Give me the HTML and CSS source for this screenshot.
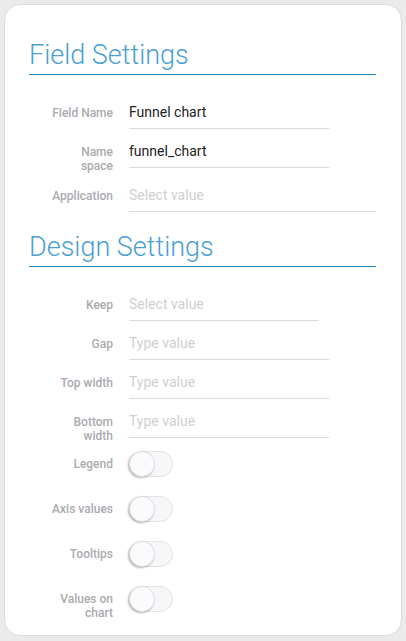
FILE: index.html
```html
<!DOCTYPE html>
<html>
<head>
<meta charset="utf-8">
<link rel="stylesheet" href="styles.css">
</head>
<body>
<div class="card">
  <section class="section">
    <h2 class="title">Field Settings</h2>
    <div class="row">
      <div class="label">Field Name</div>
      <div class="field"><span class="value">Funnel chart</span></div>
    </div>
    <div class="row">
      <div class="label">Name<br>space</div>
      <div class="field"><span class="value">funnel_chart</span></div>
    </div>
    <div class="row">
      <div class="label">Application</div>
      <div class="field field-wide"><span class="placeholder">Select value</span></div>
    </div>
  </section>
  <section class="section">
    <h2 class="title">Design Settings</h2>
    <div class="row">
      <div class="label">Keep</div>
      <div class="field field-short"><span class="placeholder">Select value</span></div>
    </div>
    <div class="row">
      <div class="label">Gap</div>
      <div class="field"><span class="placeholder">Type value</span></div>
    </div>
    <div class="row">
      <div class="label">Top width</div>
      <div class="field"><span class="placeholder">Type value</span></div>
    </div>
    <div class="row">
      <div class="label">Bottom<br>width</div>
      <div class="field"><span class="placeholder">Type value</span></div>
    </div>
    <div class="toggles">
      <div class="toggle-row">
        <div class="label">Legend</div>
        <div class="toggle"><span class="knob"></span></div>
      </div>
      <div class="toggle-row">
        <div class="label">Axis values</div>
        <div class="toggle"><span class="knob"></span></div>
      </div>
      <div class="toggle-row">
        <div class="label">Tooltips</div>
        <div class="toggle"><span class="knob"></span></div>
      </div>
      <div class="toggle-row">
        <div class="label">Values on<br>chart</div>
        <div class="toggle"><span class="knob"></span></div>
      </div>
    </div>
  </section>
</div>
</body>
</html>
```
FILE: styles.css
```css
html, body {
  margin: 0;
  padding: 0;
}
body {
  background: #ebebeb;
  font-family: Roboto, "Liberation Sans", sans-serif;
  width: 406px;
  height: 641px;
  overflow: hidden;
}
.card {
  box-sizing: border-box;
  margin: 4px;
  width: 398px;
  height: 632px;
  background: #ffffff;
  border: 1px solid #dcdcdc;
  border-radius: 16px;
  padding: 34px 25px 0 24px;
}
.section + .section {
  margin-top: 19px;
}
.title {
  margin: 0 0 21px 0;
  font-size: 27px;
  line-height: 32px;
  font-weight: 300;
  color: #4a9fd3;
  padding-bottom: 3px;
  border-bottom: 1px solid #2a8bbf;
}
.row {
  display: flex;
  align-items: baseline;
  margin-bottom: 6px;
}
.label {
  width: 84px;
  flex: none;
  text-align: right;
  font-size: 12px;
  line-height: 14px;
  font-weight: 500;
  color: #aaaaaf;
  margin-right: 16px;
}
.field {
  width: 200px;
  padding: 6px 0;
  line-height: 20px;
  font-size: 14px;
  border-bottom: 1px solid #d9d9d9;
}
.field-wide {
  width: 247px;
}
.field-short {
  width: 190px;
}
.value {
  color: #222222;
}
.placeholder {
  color: #cfcfd2;
}
.toggles {
  display: flex;
  flex-direction: column;
  gap: 19px;
  margin-top: 8px;
}
.toggle-row {
  display: flex;
  align-items: flex-start;
}
.toggle-row .label {
  padding-top: 6px;
}
.toggle {
  box-sizing: border-box;
  width: 44px;
  height: 26px;
  border-radius: 13px;
  background: #f7f7f9;
  border: 1px solid #e3e3e6;
  position: relative;
}
.knob {
  position: absolute;
  left: -1px;
  top: -1px;
  width: 26px;
  height: 26px;
  border-radius: 50%;
  background: #fbfbfd;
  box-shadow: -1px 1px 2px rgba(0,0,0,0.3);
  box-sizing: border-box;
  border: 1px solid #e0e0e3;
}
```
